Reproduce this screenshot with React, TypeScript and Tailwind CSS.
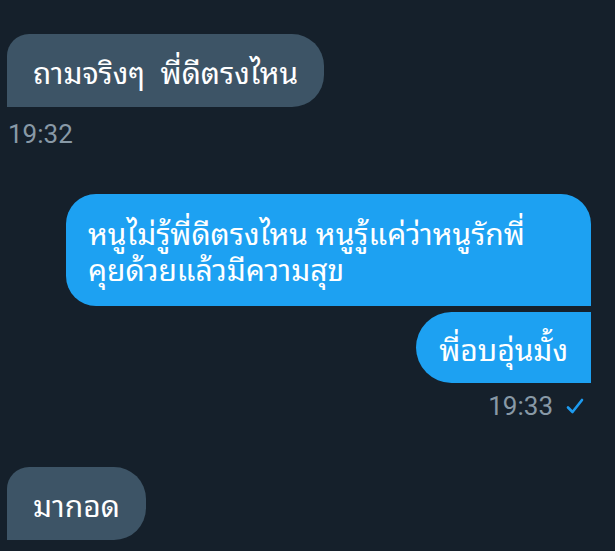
const thai = { fontFamily: '"Noto Sans Thai Looped", "Loma", "Garuda", "Waree", "Noto Sans Thai", "Noto Sans", sans-serif' };

const Check = () => (
  <svg width="18" height="16" viewBox="0 0 18 16" fill="none">
    <path d="M2 9.5 L6.5 14 L16 2" stroke="#1d9bf0" strokeWidth="2.6" strokeLinecap="round" strokeLinejoin="round" />
  </svg>
);

export default function App() {
  return (
    <div className="w-[615px] h-[551px] overflow-hidden bg-[#15202b] flex flex-col px-[7px] pt-[34px]" style={thai}>
      <div className="self-start bg-[#3d5466] text-white text-[30px] leading-[37px] pl-[26px] pr-[26px] py-[18px] rounded-tl-[22px] rounded-r-[32px] whitespace-nowrap">
        ถามจริงๆ&nbsp; พี่ดีตรงไหน
      </div>
      <div className="self-start mt-[12px] ml-[1px] text-[26px] leading-[30px] text-[#8899a6] font-['Roboto']">19:32</div>

      <div className="self-end mr-[17px] mt-[45px] w-[525px] bg-[#1da1f2] text-white text-[30px] leading-[36px] pl-[22px] pr-[4px] pt-[20px] pb-[20px] rounded-l-[30px] rounded-tr-[30px] whitespace-nowrap">
        หนูไม่รู้พี่ดีตรงไหน หนูรู้แค่ว่าหนูรักพี่
        <br />
        คุยด้วยแล้วมีความสุข
      </div>
      <div className="self-end mr-[17px] mt-[6px] bg-[#1da1f2] text-white text-[30px] leading-[37px] pl-[23px] pr-[23px] py-[17px] rounded-l-[36px] whitespace-nowrap">
        พี่อบอุ่นมั้ง
      </div>
      <div className="self-end mr-[24px] mt-[8px] flex items-center gap-[13px]">
        <span className="text-[26px] leading-[30px] text-[#8899a6] font-['Roboto']">19:33</span>
        <Check />
      </div>

      <div className="self-start mt-[46px] bg-[#3d5466] text-white text-[30px] leading-[37px] pl-[26px] pr-[26px] py-[18px] rounded-tl-[22px] rounded-r-[32px]">
        มากอด
      </div>
    </div>
  );
}
